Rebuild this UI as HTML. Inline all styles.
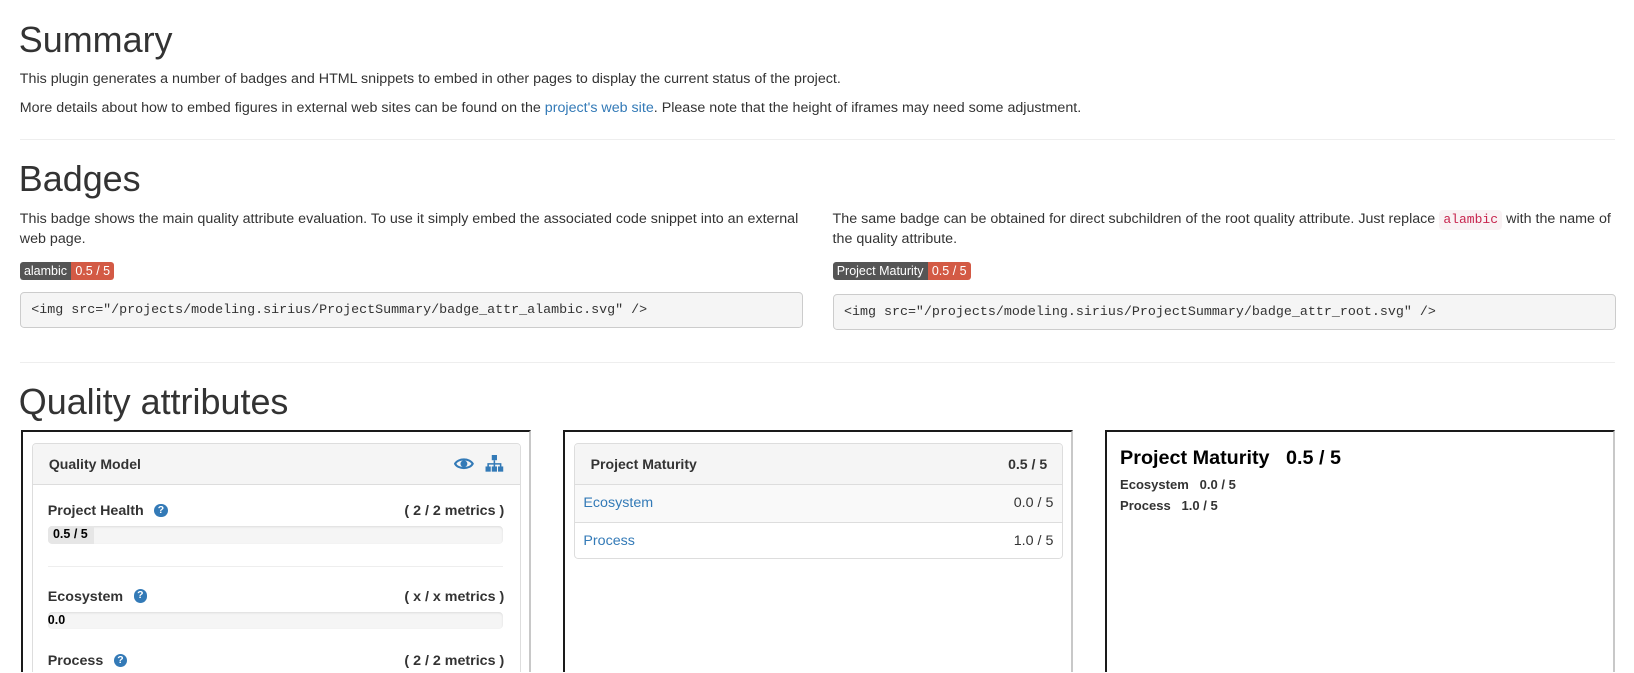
<!DOCTYPE html>
<html><head><meta charset="utf-8"><style>
html,body{margin:0;padding:0;background:#fff;overflow:hidden;height:673px}
#w{zoom:1.042;width:1568px;height:645px;overflow:hidden;position:relative;font-family:"Liberation Sans",Arial,sans-serif;font-size:13.7px;color:#333;line-height:18.5px}
.a{position:absolute}
h1{position:absolute;margin:0;font-weight:400;font-size:34.5px;line-height:40px;color:#333}
p{margin:0;position:absolute}
a{color:#337ab7;text-decoration:none}
.hr{position:absolute;left:19px;width:1531px;height:1px;background:#eee}
.badge{position:absolute;height:18px;font-size:12px;line-height:18px;color:#fff;border-radius:3px;overflow:hidden;display:flex}
.badge span{padding:0 4px}
.pre{position:absolute;height:35px;background:#f5f5f5;border:1px solid #ccc;border-radius:4px;font-family:"Liberation Mono",monospace;font-size:12.8px;line-height:35px;padding-left:10px;box-sizing:border-box;color:#333}
code{font-family:"Liberation Mono",monospace;font-size:12.5px;color:#c7254e;background:#f9f2f4;padding:2px 4px;border-radius:4px}
.fr{position:absolute;top:413px;width:490px;height:260px;border:2px solid #c8c8c8;border-top-color:#1a1a1a;border-left-color:#1a1a1a;box-sizing:border-box}
.panel{position:absolute;border:1px solid #ddd;border-radius:4px;box-sizing:border-box;background:#fff}
.ph{background:#f5f5f5;border-bottom:1px solid #ddd;height:39px;font-weight:bold;font-size:13.5px;line-height:39px;border-radius:4px 4px 0 0;position:relative}
.b{font-weight:bold}
.bar{position:absolute;left:14px;width:437px;height:17px;background:#f5f5f5;border-radius:4px;box-shadow:inset 0 1px 2px rgba(0,0,0,.1);font-size:12px;font-weight:bold;line-height:17px;color:#000}
.q{display:inline-block;width:13px;height:13px;border-radius:50%;background:#337ab7;color:#fff;font-size:10px;line-height:13px;text-align:center;font-weight:bold;vertical-align:middle;margin-left:10px;position:relative;top:-1px}
</style></head><body><div id="w">
<h1 style="left:18px;top:18px">Summary</h1>
<p style="left:19px;top:67px">This plugin generates a number of badges and HTML snippets to embed in other pages to display the current status of the project.</p>
<p style="left:19px;top:95px">More details about how to embed figures in external web sites can be found on the <a>project's web site</a>. Please note that the height of iframes may need some adjustment.</p>
<div class="hr" style="top:133px"></div>
<h1 style="left:18px;top:152px">Badges</h1>
<p style="left:19px;top:202px;width:760px">This badge shows the main quality attribute evaluation. To use it simply embed the associated code snippet into an external web page.</p>
<p style="left:799px;top:202px;width:752px">The same badge can be obtained for direct subchildren of the root quality attribute. Just replace <code>alambic</code> with the name of the quality attribute.</p>
<div class="badge" style="left:19px;top:251px"><span style="background:#555">alambic</span><span style="background:#d35a45">0.5 / 5</span></div>
<div class="badge" style="left:799px;top:251px"><span style="background:#555">Project Maturity</span><span style="background:#d35a45">0.5 / 5</span></div>
<div class="pre" style="left:19px;top:280px;width:752px">&lt;img src="/projects/modeling.sirius/ProjectSummary/badge_attr_alambic.svg" /&gt;</div>
<div class="pre" style="left:799px;top:282px;width:752px">&lt;img src="/projects/modeling.sirius/ProjectSummary/badge_attr_root.svg" /&gt;</div>
<div class="hr" style="top:347px"></div>
<h1 style="left:18px;top:366px">Quality attributes</h1>

<div class="fr" style="left:20px">
 <div class="panel" style="left:9px;top:10px;width:469px;height:260px">
  <div class="ph"><span style="margin-left:15px">Quality Model</span>
   <svg class="a" style="left:404px;top:13px" width="19" height="13" viewBox="0 0 19 13"><path d="M1 6.5C4 1 15 1 18 6.5C15 12 4 12 1 6.5Z" fill="none" stroke="#337ab7" stroke-width="2"/><circle cx="9.5" cy="6.5" r="3.3" fill="#337ab7"/></svg>
   <svg class="a" style="left:434px;top:11px" width="18" height="17" viewBox="0 0 18 17"><rect x="6.5" y="0" width="5" height="5" fill="#337ab7"/><path d="M9 5v3M3 12V8.5h12V12M9 8v4" stroke="#337ab7" stroke-width="1.5" fill="none"/><rect x="0.5" y="11" width="5" height="5" fill="#337ab7"/><rect x="6.5" y="11" width="5" height="5" fill="#337ab7"/><rect x="12.5" y="11" width="5" height="5" fill="#337ab7"/></svg>
  </div>
  <div class="a b" style="left:14px;top:56px">Project Health<span class="q">?</span></div>
  <div class="a b" style="right:15px;top:56px">( 2 / 2 metrics )</div>
  <div class="bar" style="top:79px"><span style="display:inline-block;width:44px;background:#e6e6e6;border-radius:4px 0 0 4px;padding-left:5px;box-sizing:border-box">0.5 / 5</span></div>
  <div class="a" style="left:14px;top:117px;width:437px;height:1px;background:#eee"></div>
  <div class="a b" style="left:14px;top:138px">Ecosystem<span class="q">?</span></div>
  <div class="a b" style="right:15px;top:138px">( x / x metrics )</div>
  <div class="bar" style="top:161px">0.0</div>
  <div class="a b" style="left:14px;top:200px">Process<span class="q">?</span></div>
  <div class="a b" style="right:15px;top:200px">( 2 / 2 metrics )</div>
 </div>
</div>

<div class="fr" style="left:540px">
 <div class="panel" style="left:9px;top:10px;width:469px;height:112px">
  <div class="ph"><span style="margin-left:15px">Project Maturity</span><span class="a" style="right:14px;top:0">0.5 / 5</span></div>
  <div style="height:35px;line-height:35px;background:#f9f9f9;border-bottom:1px solid #ddd;position:relative"><a style="margin-left:8px">Ecosystem</a><span class="a" style="right:8px;top:0">0.0 / 5</span></div>
  <div style="height:35px;line-height:35px;position:relative"><a style="margin-left:8px">Process</a><span class="a" style="right:8px;top:0">1.0 / 5</span></div>
 </div>
</div>

<div class="fr" style="left:1060px">
 <div class="a b" style="left:13px;top:14px;font-size:19px;line-height:22px;color:#000">Project Maturity &nbsp;&nbsp;0.5 / 5</div>
 <div class="a b" style="left:13px;top:41px;font-size:12.5px">Ecosystem &nbsp;&nbsp;0.0 / 5</div>
 <div class="a b" style="left:13px;top:61px;font-size:12.5px">Process &nbsp;&nbsp;1.0 / 5</div>
</div>
</div></body></html>
